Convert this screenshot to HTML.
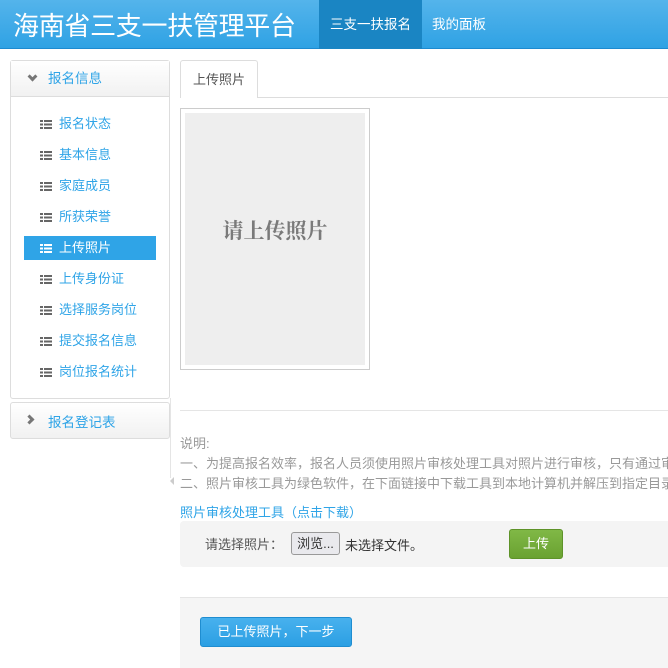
<!DOCTYPE html>
<html><head><meta charset="utf-8"><style>
*{margin:0;padding:0;box-sizing:border-box}
body{width:668px;height:668px;overflow:hidden;background:#fff;font-family:"Liberation Sans","Noto Sans CJK SC",sans-serif;font-size:13px;color:#555;position:relative}
.a{position:absolute}
.hdr{left:0;top:0;width:668px;height:49px;background:linear-gradient(#54b4eb,#2fa2e4);border-bottom:1px solid #1d8ad0}
.brand{left:13px;top:6px;font-size:26px;color:#fff;white-space:nowrap;letter-spacing:-0.3px}
.nav1{left:319px;top:0;width:103px;height:49px;background:#1a85c3;color:#fff;font-size:13.5px;line-height:50px;text-align:center}
.nav2{left:432px;top:0;height:49px;color:#fff;font-size:13.5px;line-height:50px}
.panel{border:1px solid #ddd;border-radius:3px;background:#fff}
.ph{background:linear-gradient(#fff,#f1f1f1);height:36px;border-bottom:1px solid #ddd;color:#2fa4e7;font-size:13.5px;line-height:36px;padding-left:37px;position:relative}
.item{left:24px;width:132px;height:24px;line-height:24px;color:#2fa4e7;font-size:13px;padding-left:35px}
.item.on{background:#2fa4e7;color:#fff}
.ic{position:absolute;left:16px;top:8px;width:12px;height:9px;background:repeating-linear-gradient(#666 0 2px,transparent 2px 3.5px)}
.ic:before{content:"";position:absolute;left:3px;top:0;width:1px;height:9px;background:#fff}
.on .ic{background:repeating-linear-gradient(#fff 0 2px,transparent 2px 3.5px)}
.on .ic:before{background:#2fa4e7}
.txt{white-space:nowrap;color:#999;font-size:13px}
.chev{width:7px;height:7px;border-right:3px solid #777;border-bottom:3px solid #777}
</style></head><body>
<div class="a hdr"></div>
<div class="a brand">海南省三支一扶管理平台</div>
<div class="a nav1">三支一扶报名</div>
<div class="a nav2">我的面板</div>

<div class="a panel" style="left:10px;top:60px;width:160px;height:339px">
 <div class="ph">报名信息</div>
</div>
<div class="a chev" style="left:29px;top:73px;transform:rotate(45deg)"></div>
<div class="a item" style="top:112px"><i class="ic"></i>报名状态</div>
<div class="a item" style="top:143px"><i class="ic"></i>基本信息</div>
<div class="a item" style="top:174px"><i class="ic"></i>家庭成员</div>
<div class="a item" style="top:205px"><i class="ic"></i>所获荣誉</div>
<div class="a item on" style="top:236px"><i class="ic"></i>上传照片</div>
<div class="a item" style="top:267px"><i class="ic"></i>上传身份证</div>
<div class="a item" style="top:298px"><i class="ic"></i>选择服务岗位</div>
<div class="a item" style="top:329px"><i class="ic"></i>提交报名信息</div>
<div class="a item" style="top:360px"><i class="ic"></i>岗位报名统计</div>
<div class="a panel" style="left:10px;top:402px;width:160px;height:37px;background:linear-gradient(#fff,#f1f1f1)">
 <div class="a" style="left:37px;top:8px;color:#2fa4e7;font-size:13.5px">报名登记表</div>
</div>
<div class="a chev" style="left:26px;top:416px;transform:rotate(-45deg)"></div>
<div class="a" style="left:170px;top:398px;width:1px;height:80px;background:#e5e5e5"></div>
<div class="a" style="left:170px;top:477px;width:0;height:0;border:4px solid transparent;border-right-color:#ccc;border-left:0"></div>

<div class="a" style="left:180px;top:97px;width:488px;height:1px;background:#ddd"></div>
<div class="a" style="left:180px;top:60px;width:78px;height:38px;border:1px solid #ddd;border-bottom:none;border-radius:3px 3px 0 0;background:#fff;color:#555;font-size:13px;line-height:37px;text-align:center">上传照片</div>

<div class="a" style="left:180px;top:108px;width:190px;height:262px;border:1px solid #ccc;background:#fff"></div>
<div class="a" style="left:185px;top:113px;width:180px;height:252px;background:#eee"></div>
<div class="a" style="left:185px;top:215px;width:180px;text-align:center;font-family:'Noto Serif CJK SC',serif;font-weight:bold;font-size:21px;color:#7a7a7a">请上传照片</div>

<div class="a" style="left:180px;top:410px;width:488px;height:1px;background:#e5e5e5"></div>
<div class="a txt" style="left:180px;top:433px">说明:</div>
<div class="a txt" style="left:180px;top:453px">一、为提高报名效率，报名人员须使用照片审核处理工具对照片进行审核，只有通过审核</div>
<div class="a txt" style="left:180px;top:473px">二、照片审核工具为绿色软件，在下面链接中下载工具到本地计算机并解压到指定目录</div>
<div class="a txt" style="left:180px;top:502px;color:#2fa4e7">照片审核处理工具（点击下载）</div>
<div class="a" style="left:180px;top:521px;width:500px;height:46px;background:#f4f4f4;border-radius:4px"></div>
<div class="a txt" style="left:205px;top:534px;color:#555">请选择照片：</div>
<div class="a" style="left:291px;top:532px;width:49px;height:23px;border:1px solid #999;border-radius:3px;background:#e9e9ed;color:#333;font-size:13px;line-height:21px;text-align:center">浏览...</div>
<div class="a txt" style="left:345px;top:535px;color:#333">未选择文件。</div>
<div class="a" style="left:509px;top:529px;width:54px;height:30px;background:linear-gradient(#80b846,#6aa231);border:1px solid #5e9329;border-radius:3px;color:#fff;text-align:center;line-height:28px;font-size:13px">上传</div>

<div class="a" style="left:180px;top:597px;width:488px;height:71px;background:#f5f5f5;border-top:1px solid #e5e5e5"></div>
<div class="a" style="left:200px;top:617px;width:152px;height:30px;background:linear-gradient(#48b1ee,#2b9fe3);border:1px solid #1f8dd0;border-radius:3px;color:#fff;text-align:center;line-height:28px;font-size:13px">已上传照片，下一步</div>
</body></html>
